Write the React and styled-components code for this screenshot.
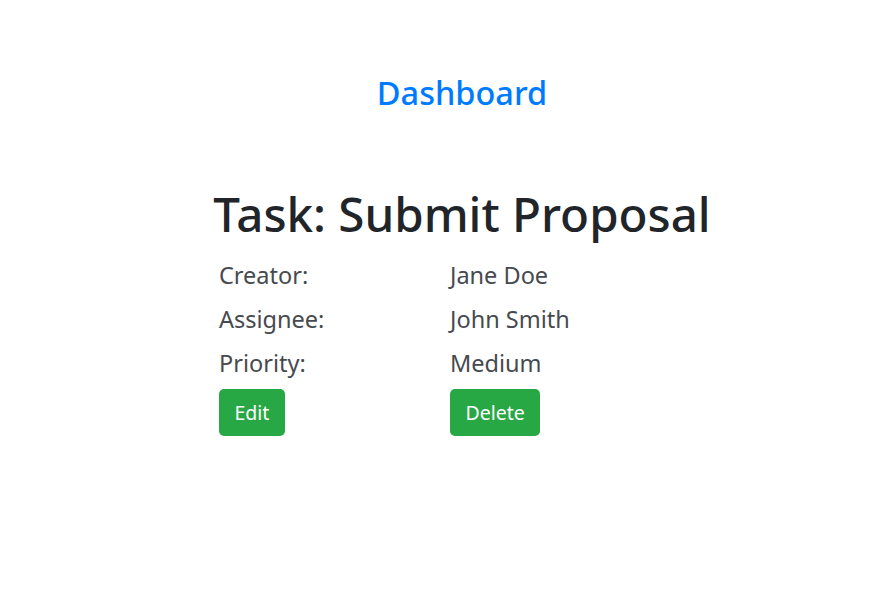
import React from 'react';
import styled, { createGlobalStyle } from 'styled-components';

const GlobalStyle = createGlobalStyle`
  body {
    margin: 0;
    background: #fff;
    font-family: "Noto Sans", "Open Sans", sans-serif;
    color: #212529;
  }
`;

const Page = styled.div`
  display: flex;
  flex-direction: column;
  align-items: center;
  padding: 72px 0 0 28px;
`;

const NavLink = styled.a`
  color: #007bff;
  font-size: 32.5px;
  font-weight: 500;
  line-height: 42px;
  text-decoration: none;
`;

const Title = styled.h1`
  margin: 69px 0 0;
  font-size: 47.5px;
  font-weight: 500;
  line-height: 62px;
  color: #212529;
`;

const Details = styled.div`
  width: 486px;
  margin-top: 8px;
  display: grid;
  grid-template-columns: 231px 1fr;
`;

const Cell = styled.div`
  font-size: 23.5px;
  line-height: 44px;
  color: #464a4f;
`;

const Actions = styled.div`
  margin-top: 4px;
`;

const Button = styled.button`
  height: 47px;
  padding: 0 15.5px;
  border: none;
  border-radius: 5px;
  background: #28a745;
  color: #fff;
  font-family: inherit;
  font-size: 19.5px;
  cursor: pointer;
`;

const rows = [
  ['Creator:', 'Jane Doe'],
  ['Assignee:', 'John Smith'],
  ['Priority:', 'Medium'],
];

export default function App() {
  return (
    <>
      <GlobalStyle />
      <Page>
        <NavLink href="#">Dashboard</NavLink>
        <Title>Task: Submit Proposal</Title>
        <Details>
          {rows.map(([label, value]) => (
            <React.Fragment key={label}>
              <Cell>{label}</Cell>
              <Cell>{value}</Cell>
            </React.Fragment>
          ))}
          <Actions><Button>Edit</Button></Actions>
          <Actions><Button>Delete</Button></Actions>
        </Details>
      </Page>
    </>
  );
}
